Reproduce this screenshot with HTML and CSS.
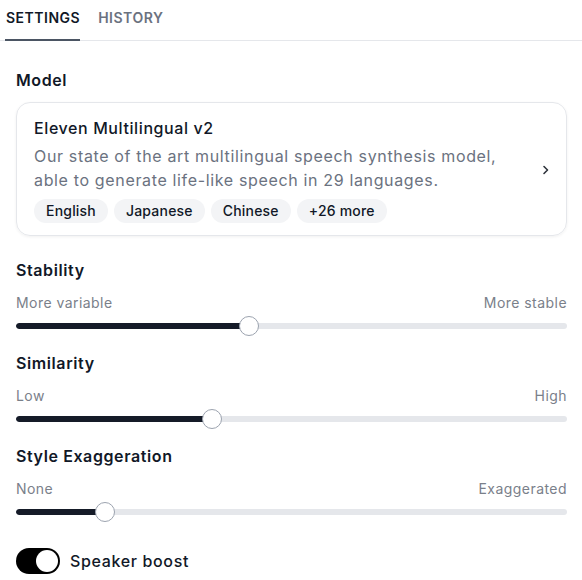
FILE: index.html
```html
<!DOCTYPE html>
<html>
<head>
<meta charset="utf-8">
<link rel="stylesheet" href="styles.css">
</head>
<body>
<div class="tabs">
  <div class="tab active">SETTINGS</div>
  <div class="tab">HISTORY</div>
</div>
<div class="content">
  <div class="label model-label">Model</div>
  <div class="card">
    <div class="card-body">
      <div class="card-title">Eleven Multilingual v2</div>
      <div class="card-desc">Our state of the art multilingual speech synthesis model, able to generate life-like speech in 29 languages.</div>
      <div class="chips">
        <span class="chip">English</span>
        <span class="chip">Japanese</span>
        <span class="chip">Chinese</span>
        <span class="chip">+26 more</span>
      </div>
    </div>
    <svg class="chevron" width="8" height="12" viewBox="0 0 8 12"><path d="M2 2.5L5.5 6L2 9.5" fill="none" stroke="#2f343c" stroke-width="1.6" stroke-linecap="round" stroke-linejoin="round"/></svg>
  </div>

  <div class="group first">
    <div class="label">Stability</div>
    <div class="sub"><span>More variable</span><span>More stable</span></div>
    <div class="slider">
      <div class="track"><div class="fill" style="width:233px"></div></div>
      <div class="thumb" style="left:223px"></div>
    </div>
  </div>

  <div class="group">
    <div class="label">Similarity</div>
    <div class="sub"><span>Low</span><span>High</span></div>
    <div class="slider">
      <div class="track"><div class="fill" style="width:196px"></div></div>
      <div class="thumb" style="left:186px"></div>
    </div>
  </div>

  <div class="group">
    <div class="label">Style Exaggeration</div>
    <div class="sub"><span>None</span><span>Exaggerated</span></div>
    <div class="slider">
      <div class="track"><div class="fill" style="width:89px"></div></div>
      <div class="thumb" style="left:79px"></div>
    </div>
  </div>

  <div class="toggle-row">
    <div class="toggle"><div class="knob"></div></div>
    <span class="toggle-label">Speaker boost</span>
  </div>
</div>
</body>
</html>
```

FILE: styles.css
```css
* { box-sizing: border-box; }
html, body { margin: 0; padding: 0; background: #fff; }
body {
  font-family: Inter, "Noto Sans", "Liberation Sans", sans-serif;
  color: #111827;
  width: 582px;
}
.tabs {
  display: flex;
  gap: 18px;
  padding-left: 5px;
  border-bottom: 1px solid #e5e7eb;
  height: 41px;
}
.tab {
  font-size: 14px;
  line-height: 20px;
  font-weight: 600;
  padding: 8px 0 11px;
  color: #6b7280;
  letter-spacing: 0.5px;
}
.tab.active {
  color: #111827;
  border-bottom: 2px solid #4b5563;
  margin-bottom: -1px;
  padding-left: 1px;
}
.content {
  padding: 27px 15px 0 16px;
}
.label {
  font-size: 16px;
  line-height: 24px;
  font-weight: 600;
  color: #111827;
  letter-spacing: 0.6px;
}
.model-label { margin-bottom: 10px; }
.card {
  display: flex;
  align-items: center;
  border: 1px solid #e5e7eb;
  border-radius: 14px;
  padding: 13px 17px 12px 17px;
  box-shadow: 0 1px 3px rgba(0,0,0,0.06);
}
.card-body { flex: 1; padding-right: 18px; }
.card-title {
  font-size: 16px;
  line-height: 24px;
  font-weight: 500;
  color: #111827;
  letter-spacing: 0.6px;
}
.card-desc {
  margin-top: 4px;
  font-size: 16px;
  line-height: 24px;
  color: #6b7280;
  letter-spacing: 0.65px;
}
.chips {
  display: flex;
  gap: 6px;
  margin-top: 7px;
}
.chip {
  background: #f3f4f6;
  border-radius: 12px;
  height: 24px;
  line-height: 24px;
  padding: 0 12px;
  font-size: 14px;
  font-weight: 500;
  color: #111827;
  letter-spacing: 0.2px;
}
.chevron { flex: none; margin-right: -1px; }
.group { margin-top: 15px; }
.group.first { margin-top: 22px; }
.sub {
  display: flex;
  justify-content: space-between;
  margin-top: 11px;
  font-size: 14px;
  line-height: 20px;
  color: #7a808a;
  letter-spacing: 0.45px;
}
.slider {
  position: relative;
  height: 20px;
  margin-top: 3px;
  display: flex;
  align-items: center;
}
.track {
  width: 100%;
  height: 6px;
  border-radius: 3px;
  background: #e5e7eb;
  overflow: hidden;
}
.fill {
  height: 100%;
  background: #151b28;
  border-radius: 3px;
}
.thumb {
  position: absolute;
  top: 0;
  width: 20px;
  height: 20px;
  border-radius: 50%;
  background: #fff;
  border: 1.5px solid #9ca3af;
}
.toggle-row {
  display: flex;
  align-items: center;
  gap: 10px;
  margin-top: 26px;
}
.toggle {
  width: 44px;
  height: 26px;
  border-radius: 13px;
  background: #000;
  display: flex;
  align-items: center;
  justify-content: flex-end;
  padding: 2px;
}
.knob {
  width: 22px;
  height: 22px;
  border-radius: 50%;
  background: #fff;
}
.toggle-label {
  font-size: 16px;
  line-height: 24px;
  font-weight: 500;
  color: #111827;
  letter-spacing: 0.65px;
}
```
